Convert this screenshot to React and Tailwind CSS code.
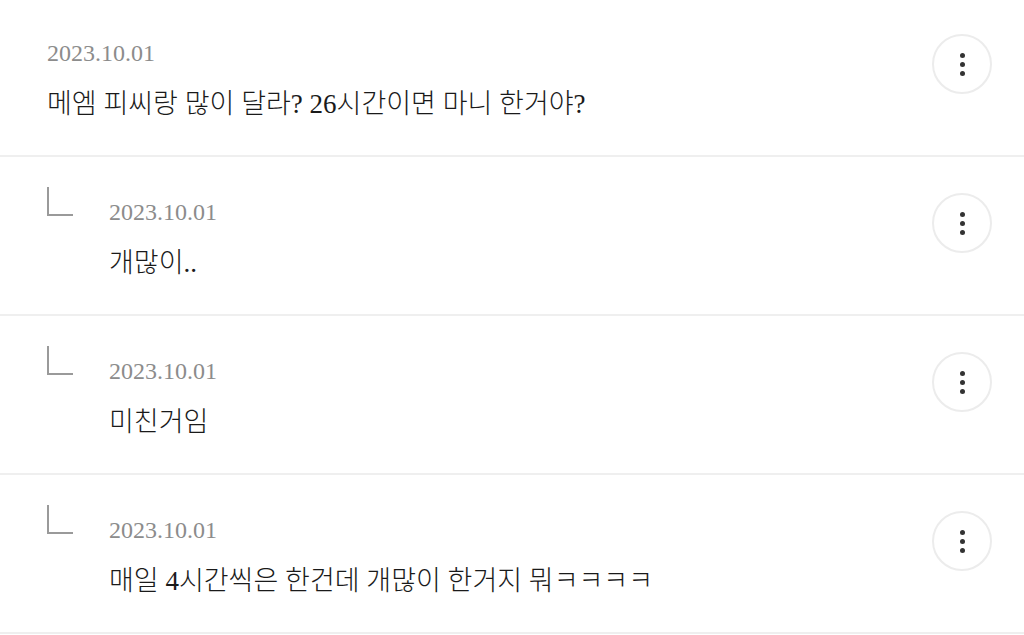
import React from "react";

const FONT = { fontFamily: '"Liberation Serif", "Noto Sans CJK KR", serif' };

function MoreButton() {
  return (
    <button className="w-[60px] h-[60px] rounded-full border-2 border-[#ececec] bg-white flex flex-col items-center justify-center gap-[4px] shrink-0">
      <span className="w-[5px] h-[5px] rounded-full bg-[#333]" />
      <span className="w-[5px] h-[5px] rounded-full bg-[#333]" />
      <span className="w-[5px] h-[5px] rounded-full bg-[#333]" />
    </button>
  );
}

function ReplyIcon() {
  return (
    <div className="w-[62px] shrink-0 -mt-[6px]">
      <div className="w-[26px] h-[29px] border-l-2 border-b-2 border-[#9a9a9a]" />
    </div>
  );
}

function Row({ date, text, reply, first }) {
  return (
    <div
      className={`flex items-start pl-[47px] pr-[32px] border-b-2 border-[#efefef] ${
        first ? "h-[157px] pt-[34px]" : "h-[159px] pt-[36px]"
      }`}
    >
      {reply && <ReplyIcon />}
      <div className="flex-1 flex flex-col">
        <div className="text-[24px] leading-[34px] mt-[2px] text-[#8c8c8c]">{date}</div>
        <div className="text-[27px] leading-[34px] mt-[17px] text-[#1a1a1a] font-light">{text}</div>
      </div>
      <MoreButton />
    </div>
  );
}

export default function App() {
  const rows = [
    { date: "2023.10.01", text: "메엠 피씨랑 많이 달라? 26시간이면 마니 한거야?", reply: false },
    { date: "2023.10.01", text: "개많이..", reply: true },
    { date: "2023.10.01", text: "미친거임", reply: true },
    { date: "2023.10.01", text: "매일 4시간씩은 한건데 개많이 한거지 뭐ㅋㅋㅋㅋ", reply: true },
  ];
  return (
    <div className="w-[1024px] h-[635px] bg-white overflow-hidden" style={FONT}>
      {rows.map((r, i) => (
        <Row key={i} {...r} first={i === 0} />
      ))}
    </div>
  );
}
